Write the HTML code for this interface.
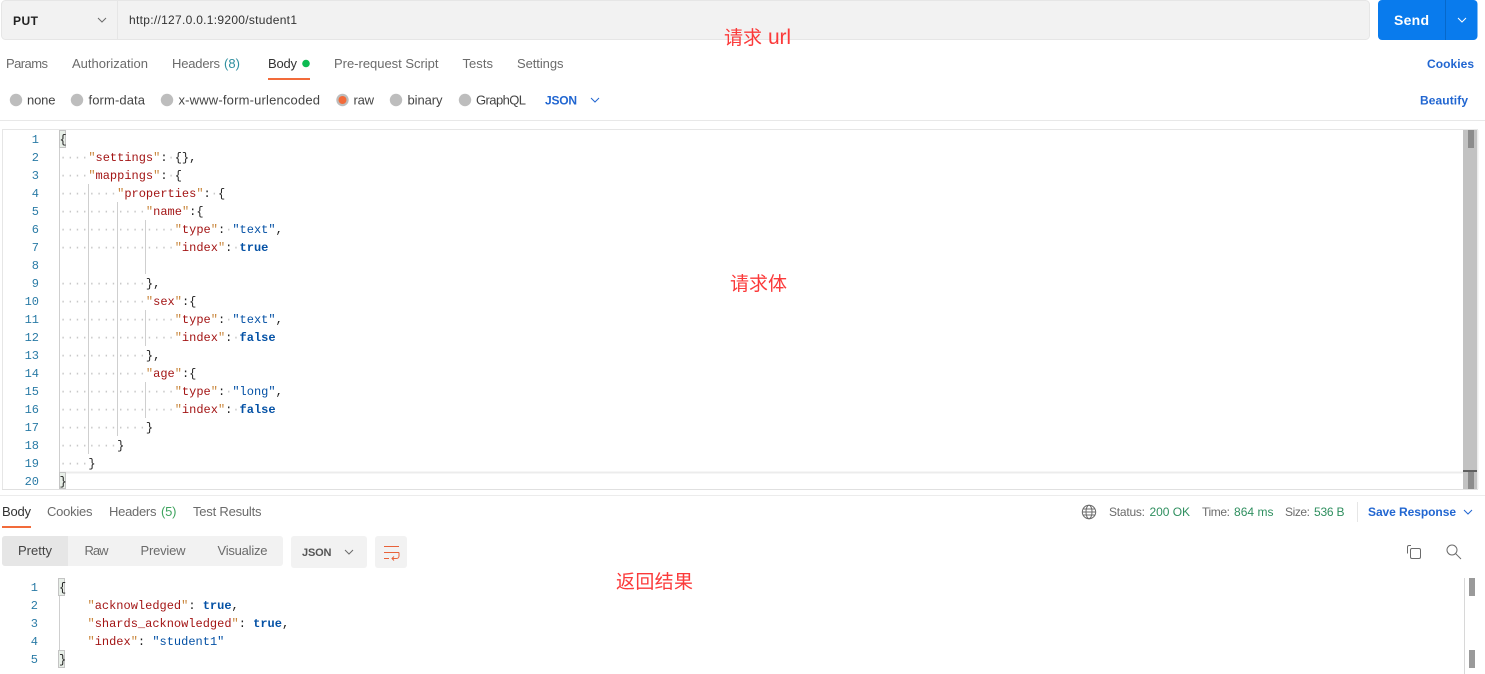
<!DOCTYPE html>
<html><head><meta charset="utf-8"><style>
html,body{margin:0;padding:0;background:#fff;width:1485px;height:674px;overflow:hidden}
svg{display:block;position:absolute;left:0;top:0}
text{font-family:"Liberation Sans","Noto Sans CJK SC",sans-serif;font-size:13px;white-space:pre;fill:#6b6b6b}
.c text{font-family:"Liberation Mono",monospace;font-size:12px;fill:#222}
.c .n{fill:#2a7ba6}
.d{fill:#c8c8c8}.k{fill:#a31515}.q{fill:#c8853a}.s{fill:#0451a5}.b{fill:#0451a5;font-weight:bold}
text.blue{fill:#2166d1;font-weight:bold;font-size:12px}
text.g{fill:#2f8f5f;font-size:12px}
text.m{font-size:12px}
text.red{font-family:"Noto Sans CJK SC","WenQuanYi Zen Hei",sans-serif;font-size:19px;fill:#fb3a3a}
.ic{fill:none;stroke:#6b6b6b;stroke-width:1}
</style></head><body>
<svg width="1485" height="674" viewBox="0 0 1485 674" xmlns="http://www.w3.org/2000/svg">
<!-- URL bar -->
<rect x="1.500" y="0.500" width="1368" height="39" rx="4" fill="#f2f2f2" stroke="#e6e6e6"/>
<line x1="117.500" y1="1" x2="117.500" y2="39" stroke="#e6e6e6"/>
<text x="13" y="25" textLength="25" style="font-weight:bold;font-size:12px;fill:#222">PUT</text>
<polyline class="ic" points="98,18 102,22 106,18"/>
<text x="129" y="24" textLength="168" style="fill:#333;font-size:12px">http://127.0.0.1:9200/student1</text>
<rect x="1378" y="0" width="99.500" height="40" rx="4" fill="#097bed"/>
<line x1="1445.500" y1="0" x2="1445.500" y2="40" stroke="#0668ca"/>
<text x="1394" y="25" textLength="35" style="font-weight:bold;font-size:14px;fill:#fff">Send</text>
<polyline class="ic" style="stroke:#fff" points="1458,18 1462,22 1466,18"/>

<!-- Request tabs -->
<text x="6" y="68" textLength="42">Params</text>
<text x="72" y="68" textLength="76">Authorization</text>
<text x="172" y="68" textLength="48">Headers</text>
<text x="224" y="68" textLength="16" style="fill:#2f8f9f">(8)</text>
<text x="268" y="68" textLength="29" style="fill:#333">Body</text>
<circle cx="306" cy="63.500" r="3.800" fill="#0cbb52"/>
<rect x="268" y="78" width="42" height="2" fill="#f26b3a"/>
<text x="334" y="68" textLength="104.500">Pre-request Script</text>
<text x="462.500" y="68" textLength="30.500">Tests</text>
<text x="517" y="68" textLength="46.500">Settings</text>
<text x="1427" y="68" textLength="47" class="blue">Cookies</text>

<!-- Body type radios -->
<g fill="#bdbdbd">
<circle cx="16" cy="100" r="6.200"/><circle cx="77" cy="100" r="6.200"/><circle cx="167" cy="100" r="6.200"/>
<circle cx="342.500" cy="100" r="6.200"/><circle cx="396" cy="100" r="6.200"/><circle cx="465" cy="100" r="6.200"/>
</g>
<circle cx="342.500" cy="100" r="4" fill="#f26b3a"/>
<text x="27" y="104.500" textLength="28.500" style="fill:#444">none</text>
<text x="88.500" y="104.500" textLength="56.500" style="fill:#444">form-data</text>
<text x="178.500" y="104.500" textLength="141.500" style="fill:#444">x-www-form-urlencoded</text>
<text x="353.500" y="104.500" textLength="20.500" style="fill:#444">raw</text>
<text x="407.500" y="104.500" textLength="35" style="fill:#444">binary</text>
<text x="476" y="104.500" textLength="50" style="fill:#444">GraphQL</text>
<text x="545" y="104.500" textLength="32" class="blue">JSON</text>
<polyline class="ic" style="stroke:#2166d1" points="591,98 595,102 599,98"/>
<text x="1420" y="104.500" textLength="48" class="blue">Beautify</text>
<line x1="0" y1="120.500" x2="1485" y2="120.500" stroke="#e8e8e8"/>

<!-- Editor frame -->
<path d="M2.500 489V129.500H1478" fill="none" stroke="#e6e6e6"/>
<line x1="2" y1="489.500" x2="1478" y2="489.500" stroke="#e0e0e0"/>
<line x1="0" y1="495.500" x2="1485" y2="495.500" stroke="#ececec"/>
<rect x="60" y="471.500" width="1403" height="2" fill="#ececec"/>
<rect x="1463" y="130" width="14" height="359" fill="#c2c2c2"/>
<rect x="1477" y="130" width="1.500" height="359" fill="#ececec"/>
<rect x="1468" y="130" width="6" height="18" fill="#8c8c8c"/>
<rect x="1463" y="470" width="14" height="2" fill="#5f5f5f"/>
<rect x="1468" y="472" width="6" height="17" fill="#8c8c8c"/>

<!-- Guides -->
<g stroke="#cfcfcf">
<line x1="59.500" y1="130" x2="59.500" y2="489"/>
<line x1="88.500" y1="184" x2="88.500" y2="454"/>
<line x1="117.500" y1="202" x2="117.500" y2="436"/>
<line x1="145.500" y1="220" x2="145.500" y2="274"/>
<line x1="145.500" y1="310" x2="145.500" y2="346"/>
<line x1="145.500" y1="382" x2="145.500" y2="418"/>
</g>
<rect x="59.500" y="130.500" width="6" height="17" fill="#e8efe8" stroke="#c4c4c4"/>
<rect x="59.500" y="472.500" width="6" height="16" fill="#e8efe8" stroke="#c4c4c4"/>

<!-- Editor code -->
<g class="c">
<g text-anchor="end">
<text class="n" x="39" y="143">1</text><text class="n" x="39" y="161">2</text><text class="n" x="39" y="179">3</text><text class="n" x="39" y="197">4</text><text class="n" x="39" y="215">5</text><text class="n" x="39" y="233">6</text><text class="n" x="39" y="251">7</text><text class="n" x="39" y="269">8</text><text class="n" x="39" y="287">9</text><text class="n" x="39" y="305">10</text><text class="n" x="39" y="323">11</text><text class="n" x="39" y="341">12</text><text class="n" x="39" y="359">13</text><text class="n" x="39" y="377">14</text><text class="n" x="39" y="395">15</text><text class="n" x="39" y="413">16</text><text class="n" x="39" y="431">17</text><text class="n" x="39" y="449">18</text><text class="n" x="39" y="467">19</text><text class="n" x="39" y="485">20</text>
</g>
<text x="59.500" y="143">{</text>
<text x="59.500" y="161"><tspan class="d">····</tspan><tspan class="q">"</tspan><tspan class="k">settings</tspan><tspan class="q">"</tspan>:<tspan class="d">·</tspan>{},</text>
<text x="59.500" y="179"><tspan class="d">····</tspan><tspan class="q">"</tspan><tspan class="k">mappings</tspan><tspan class="q">"</tspan>:<tspan class="d">·</tspan>{</text>
<text x="59.500" y="197"><tspan class="d">········</tspan><tspan class="q">"</tspan><tspan class="k">properties</tspan><tspan class="q">"</tspan>:<tspan class="d">·</tspan>{</text>
<text x="59.500" y="215"><tspan class="d">············</tspan><tspan class="q">"</tspan><tspan class="k">name</tspan><tspan class="q">"</tspan>:{</text>
<text x="59.500" y="233"><tspan class="d">················</tspan><tspan class="q">"</tspan><tspan class="k">type</tspan><tspan class="q">"</tspan>:<tspan class="d">·</tspan><tspan class="s">"text"</tspan>,</text>
<text x="59.500" y="251"><tspan class="d">················</tspan><tspan class="q">"</tspan><tspan class="k">index</tspan><tspan class="q">"</tspan>:<tspan class="d">·</tspan><tspan class="b">true</tspan></text>
<text x="59.500" y="287"><tspan class="d">············</tspan>},</text>
<text x="59.500" y="305"><tspan class="d">············</tspan><tspan class="q">"</tspan><tspan class="k">sex</tspan><tspan class="q">"</tspan>:{</text>
<text x="59.500" y="323"><tspan class="d">················</tspan><tspan class="q">"</tspan><tspan class="k">type</tspan><tspan class="q">"</tspan>:<tspan class="d">·</tspan><tspan class="s">"text"</tspan>,</text>
<text x="59.500" y="341"><tspan class="d">················</tspan><tspan class="q">"</tspan><tspan class="k">index</tspan><tspan class="q">"</tspan>:<tspan class="d">·</tspan><tspan class="b">false</tspan></text>
<text x="59.500" y="359"><tspan class="d">············</tspan>},</text>
<text x="59.500" y="377"><tspan class="d">············</tspan><tspan class="q">"</tspan><tspan class="k">age</tspan><tspan class="q">"</tspan>:{</text>
<text x="59.500" y="395"><tspan class="d">················</tspan><tspan class="q">"</tspan><tspan class="k">type</tspan><tspan class="q">"</tspan>:<tspan class="d">·</tspan><tspan class="s">"long"</tspan>,</text>
<text x="59.500" y="413"><tspan class="d">················</tspan><tspan class="q">"</tspan><tspan class="k">index</tspan><tspan class="q">"</tspan>:<tspan class="d">·</tspan><tspan class="b">false</tspan></text>
<text x="59.500" y="431"><tspan class="d">············</tspan>}</text>
<text x="59.500" y="449"><tspan class="d">········</tspan>}</text>
<text x="59.500" y="467"><tspan class="d">····</tspan>}</text>
<text x="59.500" y="485">}</text>
</g>

<!-- Response tabs -->
<text x="2" y="516" textLength="29" style="fill:#333">Body</text>
<rect x="2" y="526" width="29" height="2" fill="#f26b3a"/>
<text x="47" y="516" textLength="45.500">Cookies</text>
<text x="109" y="516" textLength="47.500">Headers</text>
<text x="161" y="516" textLength="15.500" style="fill:#3fa35f">(5)</text>
<text x="193" y="516" textLength="68.500">Test Results</text>

<!-- Status -->
<g class="ic" transform="translate(1089 512)">
<circle r="6.700"/><ellipse rx="3" ry="6.700"/><line x1="-6.700" x2="6.700"/><line x1="-6" y1="-3" x2="6" y2="-3"/><line x1="-6" y1="3" x2="6" y2="3"/>
</g>
<text x="1109" y="516" textLength="36" class="m">Status:</text>
<text x="1149.500" y="516" textLength="40.500" class="g">200 OK</text>
<text x="1202" y="516" textLength="28" class="m">Time:</text>
<text x="1234" y="516" textLength="39.500" class="g">864 ms</text>
<text x="1285" y="516" textLength="25" class="m">Size:</text>
<text x="1314" y="516" textLength="30.500" class="g">536 B</text>
<line x1="1357.500" y1="502" x2="1357.500" y2="522" stroke="#e6e6e6"/>
<text x="1368" y="516" textLength="88" class="blue">Save Response</text>
<polyline class="ic" style="stroke:#2166d1" points="1464,510 1468,514 1472,510"/>

<!-- Response toolbar -->
<rect x="2" y="536" width="281" height="30" rx="3" fill="#f2f2f2"/>
<path d="M5 536H68V566H5a3 3 0 0 1-3-3V539a3 3 0 0 1 3-3z" fill="#e6e6e6"/>
<text x="18" y="555" textLength="34" style="fill:#444">Pretty</text>
<text x="84.500" y="555" textLength="24">Raw</text>
<text x="140.500" y="555" textLength="45">Preview</text>
<text x="217.500" y="555" textLength="50">Visualize</text>
<rect x="291" y="536" width="76" height="32" rx="3" fill="#f2f2f2"/>
<text x="302" y="556" textLength="29.500" style="font-size:11px;fill:#555;font-weight:bold">JSON</text>
<polyline class="ic" points="345,550 349,554 353,550"/>
<rect x="375" y="536" width="32" height="32" rx="3" fill="#f2f2f2"/>
<g fill="none" stroke="#e8623a" stroke-width="1">
<path d="M384 546.500H399M384 552.500H399"/>
<path d="M384 558.500H389M399 552.500V556a2.500 2.500 0 0 1-2.500 2.500H392M394 556.500L392 558.500L394 560.500"/>
</g>
<g class="ic">
<path d="M1411 545.500H1409a1.500 1.500 0 0 0-1.500 1.500V553.500"/>
<rect x="1410.500" y="548.500" width="10" height="10" rx="1.500"/>
<circle cx="1452" cy="550" r="5"/><line x1="1455.700" y1="553.700" x2="1461" y2="559"/>
</g>

<!-- Response code -->
<line x1="59.500" y1="578" x2="59.500" y2="668" stroke="#cfcfcf"/>
<rect x="58.500" y="578.500" width="6" height="17" fill="#e8efe8" stroke="#c4c4c4"/>
<rect x="58.500" y="650.500" width="6" height="17" fill="#e8efe8" stroke="#c4c4c4"/>
<g class="c">
<g text-anchor="end">
<text class="n" x="38" y="591">1</text><text class="n" x="38" y="609">2</text><text class="n" x="38" y="627">3</text><text class="n" x="38" y="645">4</text><text class="n" x="38" y="663">5</text>
</g>
<text x="59" y="591">{</text>
<text x="87.500" y="609"><tspan class="q">"</tspan><tspan class="k">acknowledged</tspan><tspan class="q">"</tspan>: <tspan class="b">true</tspan>,</text>
<text x="87.500" y="627"><tspan class="q">"</tspan><tspan class="k">shards_acknowledged</tspan><tspan class="q">"</tspan>: <tspan class="b">true</tspan>,</text>
<text x="87.500" y="645"><tspan class="q">"</tspan><tspan class="k">index</tspan><tspan class="q">"</tspan>: <tspan class="s">"student1"</tspan></text>
<text x="59" y="663">}</text>
</g>
<line x1="1464.500" y1="578" x2="1464.500" y2="674" stroke="#d8d8d8"/>
<rect x="1469" y="578" width="6" height="18" fill="#9a9a9a"/>
<rect x="1469" y="650" width="6" height="18" fill="#9a9a9a"/>

<!-- Annotations -->
<text x="724" y="44" class="red">请求</text>
<text x="768" y="44" textLength="23" style="font-size:21px;fill:#fb3a3a">url</text>
<text x="730" y="290" class="red" textLength="57">请求体</text>
<text x="616" y="588" class="red" textLength="77">返回结果</text>
</svg>
</body></html>
